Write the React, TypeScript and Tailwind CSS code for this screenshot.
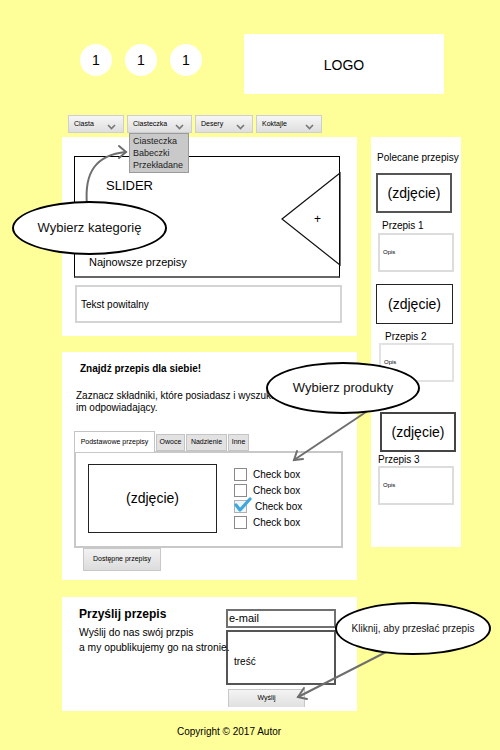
import React from "react"

const navTabs = [
    { label: "Ciasta", w: "w-[56px]" },
    { label: "Ciasteczka", w: "w-[65px]" },
    { label: "Desery", w: "w-[58px]" },
    { label: "Koktajle", w: "w-[66px]" },
]

const checks = [false, false, true, false]

function Chevron() {
    return (
        <svg width="9" height="6" viewBox="0 0 9 6" className="mt-[6px]">
            <polyline points="1,1 4.5,4.5 8,1" fill="none" stroke="#777" strokeWidth="1.6" />
        </svg>
    )
}

function Ellipse({ className, children }: { className: string; children: React.ReactNode }) {
    return (
        <div className={`absolute flex items-center justify-center rounded-[50%] border-2 border-black bg-white text-[#111] ${className}`}>
            {children}
        </div>
    )
}

export default function App() {
    return (
        <div className="relative w-[500px] h-[750px] overflow-hidden bg-[#ffff99] font-['Liberation_Sans',Arial,sans-serif] text-black">
            {/* header */}
            <div className="flex items-start pt-[34px]">
                <div className="flex gap-[13px] ml-[80px] mt-[10px]">
                    {[0, 1, 2].map(i => (
                        <div key={i} className="w-8 h-8 rounded-full bg-white flex items-center justify-center text-[14px]">1</div>
                    ))}
                </div>
                <div className="ml-[42px] w-[200px] h-[60px] bg-white flex items-center justify-center text-[14px] pt-[2px]">LOGO</div>
            </div>

            {/* nav */}
            <div className="flex gap-[3px] ml-[68px] mt-[21px]">
                {navTabs.map(t => (
                    <div key={t.label} className={`${t.w} h-[18px] flex items-center justify-between pl-[5px] pr-[7px] border border-[#cfcfcf] bg-gradient-to-b from-[#f6f6f6] to-[#dedede] text-[7px]`}>
                        <span>{t.label}</span>
                        <Chevron />
                    </div>
                ))}
            </div>

            <div className="flex mt-[4px]">
                {/* left column */}
                <div className="ml-[62px] w-[295px] flex flex-col">
                    <div className="h-[199px] bg-white pt-[19px] pl-[12px]">
                        <div className="relative w-[266px] h-[122px] border border-black border-b-2 border-b-[#666] flex flex-col justify-between pt-[22px] pb-[7px]">
                            <span className="pl-[31px] text-[13px] leading-none">SLIDER</span>
                            <span className="pl-[14px] text-[11px] leading-[13px]">Najnowsze przepisy</span>
                            <svg className="absolute inset-0 w-full h-full overflow-visible">
                                <polygon points="207,62 265,16 265,108" fill="none" stroke="#111" strokeWidth="1.2" />
                            </svg>
                            <span className="absolute left-[239px] top-[53px] text-[12px]">+</span>
                        </div>
                        <div className="mt-[7px] ml-[1px] w-[267px] h-[38px] border-2 border-[#d4d4d4] flex items-center pl-[4px] text-[10px]">Tekst powitalny</div>
                    </div>

                    <div className="mt-[16px] h-[228px] bg-white flex flex-col">
                        <span className="pl-[18px] pt-[11px] text-[10px] leading-[12px] font-bold">Znajdź przepis dla siebie!</span>
                        <p className="pl-[14px] mt-[15px] text-[10px] leading-[12px] whitespace-nowrap">
                            Zaznacz składniki, które posiadasz i wyszukaj przepis<br />im odpowiadający.
                        </p>
                        <div className="flex items-end gap-[1px] ml-[12px] mt-[16px] text-[7px]">
                            <div className="w-[81px] h-[21px] bg-white border border-[#c4c4c4] border-b-0 flex items-center justify-center relative top-[1px]">Podstawowe przepisy</div>
                            <div className="w-[29px] h-[17px] bg-[#e2e2e2] border border-[#c4c4c4] flex items-center justify-center">Owoce</div>
                            <div className="w-[41px] h-[17px] bg-[#e2e2e2] border border-[#c4c4c4] flex items-center justify-center">Nadzienie</div>
                            <div className="w-[21px] h-[17px] bg-[#e2e2e2] border border-[#c4c4c4] flex items-center justify-center">Inne</div>
                        </div>
                        <div className="ml-[12px] w-[269px] h-[97px] border-2 border-[#c8c8c8] flex pt-[11px] pl-[12px]">
                            <div className="w-[129px] h-[69px] border-[1.5px] border-[#222] flex items-center justify-center text-[14px]">(zdjęcie)</div>
                            <div className="ml-[17px] mt-[4px] flex flex-col gap-[3px]">
                                {checks.map((c, i) => (
                                    <div key={i} className="flex items-center h-[13px] text-[10px]">
                                        <div className={`relative w-[13px] h-[13px] border ${c ? "border-[#b0b0b0] bg-[#eef6fb]" : "border-[#8a8a8a]"}`}>
                                            {c && (
                                                <svg className="absolute -left-[1px] -top-[4px] overflow-visible" width="18" height="16" viewBox="0 0 18 16">
                                                    <polyline points="2,8 6,13 16,2" fill="none" stroke="#3fa7dd" strokeWidth="3.2" strokeLinecap="round" strokeLinejoin="round" />
                                                </svg>
                                            )}
                                        </div>
                                        <span className={c ? "ml-[8px]" : "ml-[6px]"}>Check box</span>
                                    </div>
                                ))}
                            </div>
                        </div>
                        <div className="ml-[21px] w-[78px] h-[23px] border border-[#c8c8c8] bg-gradient-to-b from-[#f2f2f2] to-[#dcdcdc] flex items-center justify-center text-[7px]">Dostępne przepisy</div>
                    </div>

                    <div className="mt-[17px] h-[114px] bg-white flex overflow-hidden">
                        <div className="relative z-10 w-[164px] shrink-0 pl-[17px] pt-[10px] whitespace-nowrap">
                            <div className="text-[12px] leading-[15px] font-bold">Przyślij przepis</div>
                            <div className="mt-[3px] text-[10.3px] leading-[15px]">Wyślij do nas swój przpis<br />a my opublikujemy go na stronie.</div>
                        </div>
                        <div className="pt-[12px] flex flex-col">
                            <div className="w-[110px] h-[19px] border-2 border-[#707070] flex items-center pl-[1px] text-[11px]">e-mail</div>
                            <div className="mt-[2px] w-[110px] h-[55px] border-2 border-[#555] pl-[6px] pt-[22px] text-[10px]">treść</div>
                            <div className="mt-[4px] ml-[2px] w-[77px] h-[18px] border border-b-0 border-[#c8c8c8] bg-gradient-to-b from-[#f4f4f4] to-[#e0e0e0] flex items-center justify-center text-[7px]">Wyślij</div>
                        </div>
                    </div>
                </div>

                {/* right column */}
                <div className="ml-[14px] w-[90px] h-[410px] bg-white flex flex-col">
                    <span className="mt-[15px] ml-[6px] text-[10px] leading-[12px] whitespace-nowrap">Polecane przepisy</span>
                    <div className="mt-[9px] ml-[5px] w-[76px] h-[40px] border-2 border-[#555] flex items-center justify-center text-[14px]">(zdjęcie)</div>
                    <span className="mt-[7px] ml-[11px] text-[10px] leading-[12px]">Przepis 1</span>
                    <div className="mt-[1px] ml-[7px] w-[76px] h-[39px] border-2 border-[#dcdcdc] flex items-center pl-[3px] text-[6px]">Opis</div>
                    <div className="mt-[12px] ml-[5px] w-[77px] h-[40px] border-[1.5px] border-[#222] flex items-center justify-center text-[14px]">(zdjęcie)</div>
                    <span className="mt-[7px] ml-[14px] text-[10px] leading-[12px]">Przepis 2</span>
                    <div className="ml-[8px] w-[75px] h-[39px] border-2 border-[#e2e2e2] flex items-center pl-[3px] text-[6px]">Opis</div>
                    <div className="mt-[30px] ml-[9px] w-[76px] h-[40px] border-2 border-[#444] flex items-center justify-center text-[14px]">(zdjęcie)</div>
                    <span className="mt-[2px] ml-[7px] text-[10px] leading-[12px]">Przepis 3</span>
                    <div className="ml-[7px] w-[76px] h-[39px] border-2 border-[#dcdcdc] flex items-center pl-[3px] text-[6px]">Opis</div>
                </div>
            </div>

            <div className="mt-[15px] pl-[177px] text-[10px] leading-[12px]">Copyright © 2017 Autor</div>

            {/* dropdown menu */}
            <div className="absolute left-[129px] top-[133px] w-[60px] h-[40px] bg-[#c9c9c9] border border-[#9a9a9a] pl-[3px] pt-[1px] text-[9px] leading-[12px] text-[#222]">
                <div>Ciasteczka</div>
                <div>Babeczki</div>
                <div>Przekładane</div>
            </div>

            {/* callout arrows */}
            <svg className="absolute inset-0 pointer-events-none" width="500" height="750">
                <g fill="none" stroke="#6e6e6e" strokeWidth="2" strokeLinecap="round">
                    <path d="M87,205 C84,172 96,155 126,152" />
                    <polyline points="119,146 126,152 119,158" />
                    <line x1="372" y1="408" x2="294" y2="460" />
                    <polyline points="297,451 294,460 303,459" />
                    <line x1="390" y1="650" x2="298" y2="697" />
                    <polyline points="304,688 298,697 307,699" />
                </g>
            </svg>

            <Ellipse className="left-[12px] top-[201px] w-[155px] h-[54px] text-[13px]">Wybierz kategorię</Ellipse>
            <Ellipse className="left-[266px] top-[362px] w-[154px] h-[52px] text-[13px]">Wybierz produkty</Ellipse>
            <Ellipse className="left-[335px] top-[602px] w-[156px] h-[53px] text-[10px]">Kliknij, aby przesłać przepis</Ellipse>
        </div>
    )
}
